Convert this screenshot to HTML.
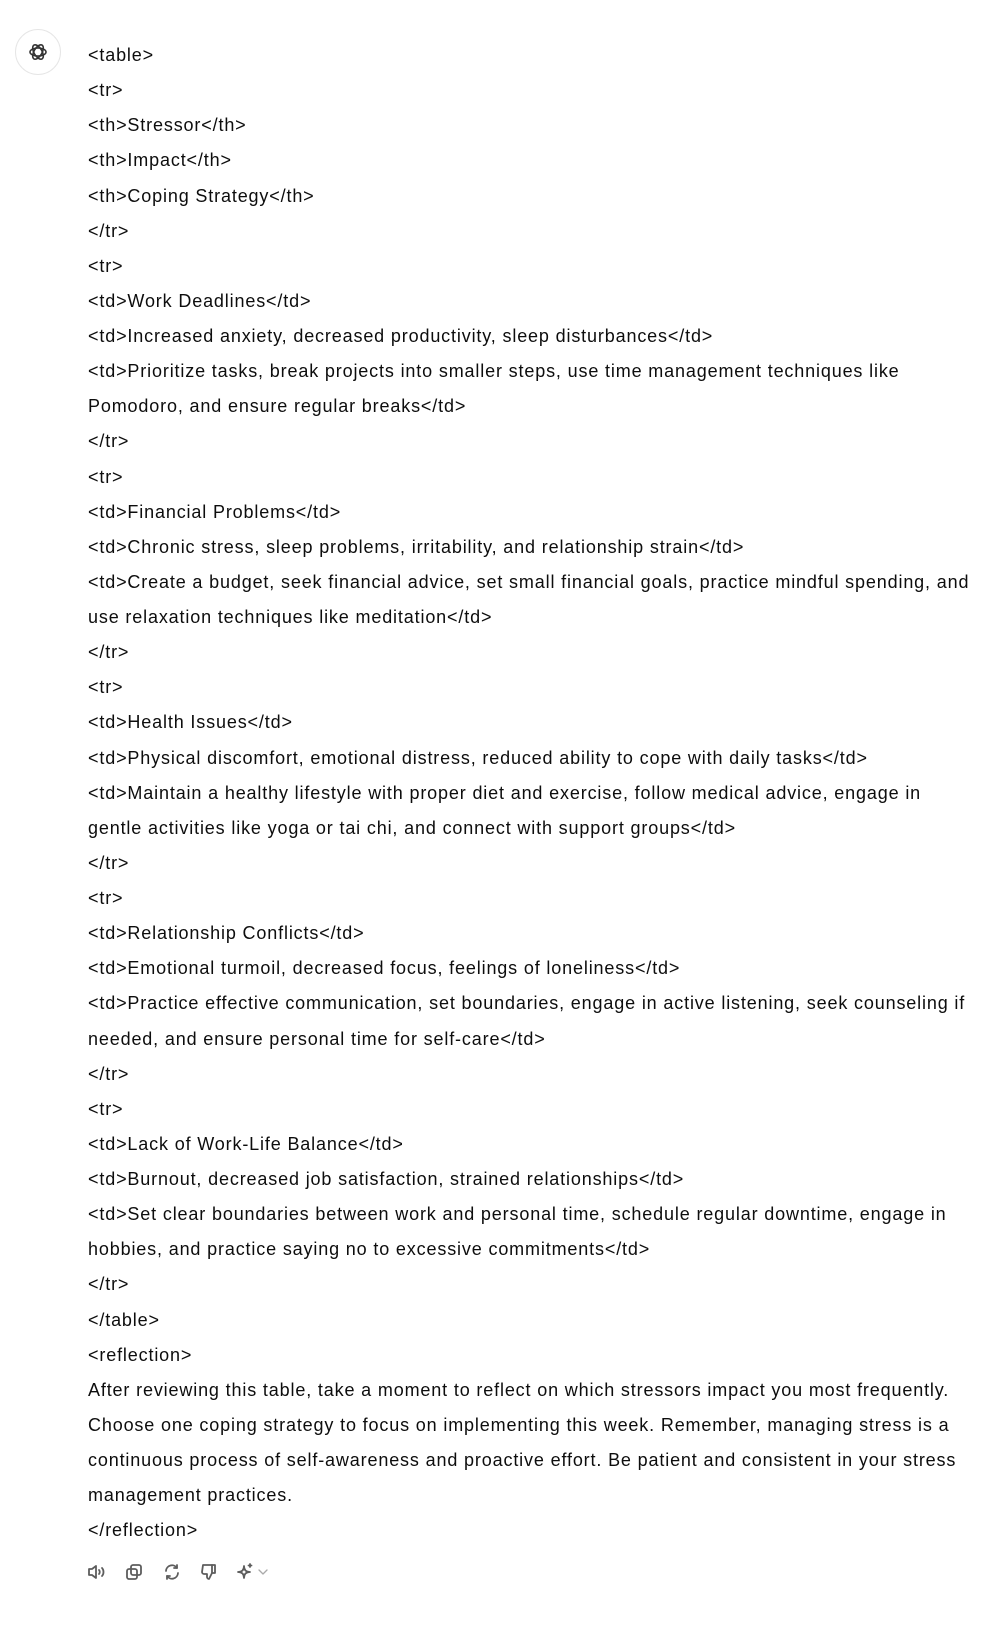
<!DOCTYPE html>
<html><head><meta charset="utf-8">
<style>
html,body{margin:0;padding:0;background:#fff;width:1000px;height:1636px;overflow:hidden}
.av{position:absolute;left:15px;top:29px;width:46px;height:46px;border-radius:50%;border:1px solid #e6e6e6;box-sizing:border-box;display:flex;align-items:center;justify-content:center}
.txt{position:absolute;left:88px;top:38px;font-family:"Liberation Sans",sans-serif;font-size:18px;letter-spacing:0.85px;line-height:35.13px;color:#0d0d0d;white-space:nowrap}
.tb{position:absolute;top:1562px;left:0}
.tb svg{position:absolute;stroke:#5d5d5d;fill:none;stroke-width:1.8;stroke-linecap:round;stroke-linejoin:round}
</style></head><body>
<div class="av"><svg width="24" height="24" viewBox="0 0 24 24" fill="none" stroke="#333" stroke-width="1.6"><g transform="translate(12 12)"><ellipse rx="8" ry="4" transform="rotate(0)"/><ellipse rx="8" ry="4" transform="rotate(60)"/><ellipse rx="8" ry="4" transform="rotate(120)"/></g></svg></div>
<div class="txt">&lt;table&gt;<br>&lt;tr&gt;<br>&lt;th&gt;Stressor&lt;/th&gt;<br>&lt;th&gt;Impact&lt;/th&gt;<br>&lt;th&gt;Coping Strategy&lt;/th&gt;<br>&lt;/tr&gt;<br>&lt;tr&gt;<br>&lt;td&gt;Work Deadlines&lt;/td&gt;<br>&lt;td&gt;Increased anxiety, decreased productivity, sleep disturbances&lt;/td&gt;<br>&lt;td&gt;Prioritize tasks, break projects into smaller steps, use time management techniques like<br>Pomodoro, and ensure regular breaks&lt;/td&gt;<br>&lt;/tr&gt;<br>&lt;tr&gt;<br>&lt;td&gt;Financial Problems&lt;/td&gt;<br>&lt;td&gt;Chronic stress, sleep problems, irritability, and relationship strain&lt;/td&gt;<br>&lt;td&gt;Create a budget, seek financial advice, set small financial goals, practice mindful spending, and<br>use relaxation techniques like meditation&lt;/td&gt;<br>&lt;/tr&gt;<br>&lt;tr&gt;<br>&lt;td&gt;Health Issues&lt;/td&gt;<br>&lt;td&gt;Physical discomfort, emotional distress, reduced ability to cope with daily tasks&lt;/td&gt;<br>&lt;td&gt;Maintain a healthy lifestyle with proper diet and exercise, follow medical advice, engage in<br>gentle activities like yoga or tai chi, and connect with support groups&lt;/td&gt;<br>&lt;/tr&gt;<br>&lt;tr&gt;<br>&lt;td&gt;Relationship Conflicts&lt;/td&gt;<br>&lt;td&gt;Emotional turmoil, decreased focus, feelings of loneliness&lt;/td&gt;<br>&lt;td&gt;Practice effective communication, set boundaries, engage in active listening, seek counseling if<br>needed, and ensure personal time for self-care&lt;/td&gt;<br>&lt;/tr&gt;<br>&lt;tr&gt;<br>&lt;td&gt;Lack of Work-Life Balance&lt;/td&gt;<br>&lt;td&gt;Burnout, decreased job satisfaction, strained relationships&lt;/td&gt;<br>&lt;td&gt;Set clear boundaries between work and personal time, schedule regular downtime, engage in<br>hobbies, and practice saying no to excessive commitments&lt;/td&gt;<br>&lt;/tr&gt;<br>&lt;/table&gt;<br>&lt;reflection&gt;<br>After reviewing this table, take a moment to reflect on which stressors impact you most frequently.<br>Choose one coping strategy to focus on implementing this week. Remember, managing stress is a<br>continuous process of self-awareness and proactive effort. Be patient and consistent in your stress<br>management practices.<br>&lt;/reflection&gt;</div>
<div class="tb">
<svg style="left:86px" width="20" height="20" viewBox="0 0 20 20"><path d="M3 7h3l4-3v12l-4-3H3z"/><path d="M13 8c1 1 1 3 0 4M16 6c2 2 2 6 0 8"/></svg>
<svg style="left:124px" width="20" height="20" viewBox="0 0 20 20"><rect x="7" y="3" width="10" height="10" rx="2"/><rect x="3" y="7" width="10" height="10" rx="2"/></svg>
<svg style="left:162px" width="20" height="20" viewBox="0 0 20 20"><path d="M4 9a6 6 0 0 1 11-3M16 11a6 6 0 0 1-11 3"/><path d="M15 3v3h-3M5 17v-3h3"/></svg>
<svg style="left:199px" width="20" height="20" viewBox="0 0 20 20"><path d="M4 3h9v8l-3 6c-1 0-2-1-2-2v-3H5c-1 0-2-1-2-2z"/><path d="M13 3h3v8h-3"/></svg>
<svg style="left:235px" width="20" height="20" viewBox="0 0 20 20"><path d="M9 4c0 4 2 6 6 6-4 0-6 2-6 6 0-4-2-6-6-6 4 0 6-2 6-6z"/><path d="M15 2v3M13.5 3.5h3"/></svg>
<svg style="left:256px;stroke:#aaa;stroke-width:1.3" width="14" height="20" viewBox="0 0 14 20"><path d="M3 8l4 4 4-4"/></svg>
</div>
</body></html>
